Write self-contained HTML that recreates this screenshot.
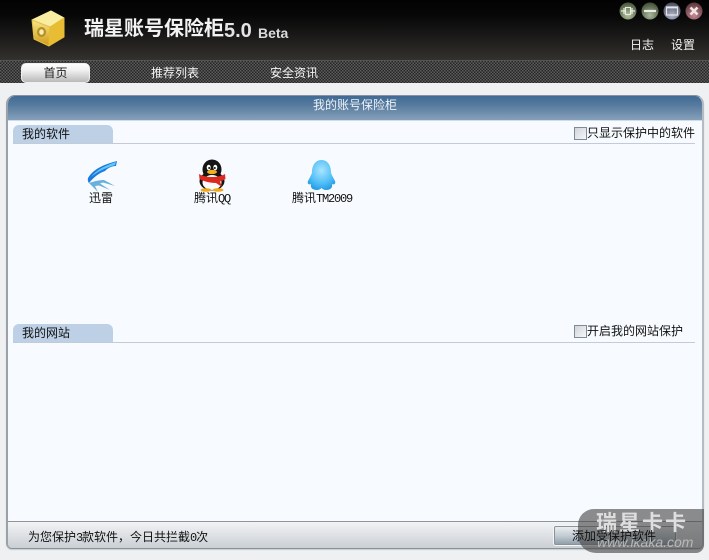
<!DOCTYPE html>
<html><head><meta charset="utf-8">
<style>
html,body{margin:0;padding:0}
body{width:709px;height:560px;position:relative;overflow:hidden;background:#eef0f2;font:12px/14px "Liberation Sans","WenQuanYi Zen Hei","Noto Sans CJK SC",sans-serif;color:#111}
div,span{position:absolute;white-space:nowrap}
span.m{position:static;font:12px/14px "Liberation Mono",monospace;letter-spacing:-1.2px}
svg{position:absolute}
.hd{left:0;top:0;width:709px;height:60px;background:linear-gradient(#020202 0,#070707 15px,#1c1b1a 38px,#32312d 60px)}
.nav{left:0;top:60px;width:709px;height:23px;border-top:1px solid #55544f;box-sizing:border-box;background-color:#3a3a3a;background-image:repeating-conic-gradient(#262626 0 25%,#5c5c5c 0 50%);background-size:3px 3px}
.white{color:#f4f4f4}
.panel{left:6px;top:95px;width:698px;height:454px;box-sizing:border-box;border:1px solid #87929e;border-left:2px solid #9aa1a8;border-right:2px solid #b4bbc2;border-radius:9px 9px 6px 6px;background:#f7fbff;overflow:hidden;box-shadow:0 1px 1px #c8cacc}
.tb{left:0;top:0;width:694px;height:24px;background:linear-gradient(#3f6a94,#55799d 35%,#86a0ba);border-bottom:1px solid #cfdbe6;text-align:center;color:#eef3f8;line-height:18px}
.tab{left:13px;width:100px;height:19px;background:#bdd0e6;border-radius:6px 6px 0 0;text-indent:9px;line-height:19px}
.ln{left:13px;width:682px;height:1px;background:#c3ccd6}
.cb{width:11px;height:11px;border:1px solid #808a94;background:linear-gradient(135deg,#cfd5da,#f6f8fa)}
.lb{text-align:center;width:100px}
.st{left:0;top:425px;width:694px;height:27px;background:linear-gradient(#f2f3f5,#c9ced3);border-top:1px solid #8f959b}
</style></head><body>
<div class="hd"></div>
<svg style="left:29px;top:10px" width="38" height="38" viewBox="0 0 38 38">
<defs><linearGradient id="g1" x1="0" y1="0" x2="0" y2="1"><stop offset="0" stop-color="#f6e68a"/><stop offset="1" stop-color="#d09a16"/></linearGradient></defs>
<path d="M3 10L22 1L35 8L21 17Z" fill="#f8eda0" stroke="#f8eda0" stroke-linejoin="round"/>
<path d="M3 10L21 17L20 36L5 29Z" fill="url(#g1)" stroke="#e5c040" stroke-linejoin="round"/>
<path d="M21 17L35 8L35 27L20 36Z" fill="#e8bd34" stroke="#e8bd34" stroke-linejoin="round"/>
<ellipse cx="12.500" cy="22" rx="4.500" ry="5" fill="#b58e24"/><ellipse cx="12.500" cy="22" rx="2.300" ry="2.800" fill="#f8eeb0"/>
</svg>
<div class="white" style="left:84px;top:17px;font-size:20px;line-height:24px;font-weight:bold;color:#f2f2f2">瑞星账号保险柜</div>
<div style="left:224px;top:19px;font:bold 20px/24px 'Liberation Sans',sans-serif;color:#e4e4e4">5.0</div>
<div style="left:258px;top:24px;font:bold 14px/18px 'Liberation Sans',sans-serif;color:#dcdcdc">Beta</div>

<svg style="left:618px;top:1px" width="86" height="20" viewBox="0 0 86 20">
<defs>
<radialGradient id="b1" cy=".75" r=".7"><stop offset="0" stop-color="#b5c09d"/><stop offset="1" stop-color="#4c5a41"/></radialGradient>
<radialGradient id="b2" cy=".75" r=".7"><stop offset="0" stop-color="#aab89a"/><stop offset="1" stop-color="#46523c"/></radialGradient>
<radialGradient id="b3" cy=".75" r=".7"><stop offset="0" stop-color="#b0b6c8"/><stop offset="1" stop-color="#4d5262"/></radialGradient>
<radialGradient id="b4" cy=".75" r=".7"><stop offset="0" stop-color="#c48a92"/><stop offset="1" stop-color="#623840"/></radialGradient>
</defs>
<circle cx="10" cy="10" r="8.500" fill="url(#b1)"/><circle cx="32" cy="10" r="8.500" fill="url(#b2)"/><circle cx="54" cy="10" r="8.500" fill="url(#b3)"/><circle cx="76" cy="10" r="8.500" fill="url(#b4)"/>
<path d="M3 10H7M13 10H17M6 7V13M14 7V13" stroke="#e8ece0" stroke-width="1.200" fill="none"/><rect x="7.500" y="6.500" width="5" height="7" fill="none" stroke="#e8ece0" stroke-width="1.100"/>
<path d="M26 10H38" stroke="#e8ece0" stroke-width="2.200"/>
<rect x="48.500" y="6" width="11" height="8" fill="none" stroke="#e4e6ee" stroke-width="1.200"/><path d="M48.500 6.700H59.500" stroke="#e4e6ee" stroke-width="1.400"/>
<path d="M72.500 6.500L79.500 13.500M79.500 6.500L72.500 13.500" stroke="#f0e4e4" stroke-width="2.600"/>
</svg>
<div class="white" style="left:630px;top:38px">日志</div>
<div class="white" style="left:671px;top:38px">设置</div>

<div class="nav"></div>
<div style="left:21px;top:63px;width:69px;height:20px;box-sizing:border-box;border-radius:5px;border:1px solid #efefef;background:linear-gradient(#fdfdfd,#f0f0f0 35%,#b9b9b9);text-align:center;line-height:18px;color:#222">首页</div>
<div class="white" style="left:151px;top:66px">推荐列表</div>
<div class="white" style="left:270px;top:66px">安全资讯</div>

<div class="panel">
 <div class="tb">我的账号保险柜</div>
 <div class="st"></div>
</div>

<div class="tab" style="top:125px">我的软件</div>
<div class="ln" style="top:143px"></div>
<div class="cb" style="left:574px;top:127px"></div>
<div style="left:587px;top:126px">只显示保护中的软件</div>

<svg style="left:86px;top:160px" width="32" height="34" viewBox="0 0 32 34">
<path d="M31 1C20 4 8 8 2 18C1.500 20 2 22 3 23C8 17 13 13 19 11C23 7 27 6 30 6Z" fill="#1d7be0"/>
<path d="M30 2C21 5 11 9 5 17C11 12 19 8 29 5Z" fill="#62c6f7"/>
<path d="M3 23C9 21 14 20 18 20L29 26L17 22.500L14 23.500L24 30L13 25.500L9 26L12 32L6 26Z" fill="#6ab0dc"/>
</svg>
<div class="lb" style="left:51px;top:191px">迅雷</div>

<svg style="left:196px;top:159px" width="32" height="33" viewBox="0 0 32 33">
<ellipse cx="16" cy="10.500" rx="9.500" ry="10" fill="#151515"/>
<ellipse cx="16" cy="22" rx="12.500" ry="9.500" fill="#151515"/>
<ellipse cx="16" cy="23.500" rx="9.500" ry="7.500" fill="#fbfbfb"/>
<ellipse cx="12.700" cy="8.500" rx="2" ry="2.800" fill="#fff"/><ellipse cx="19.300" cy="8.500" rx="2" ry="2.800" fill="#fff"/>
<circle cx="13.200" cy="9" r="1" fill="#111"/><circle cx="18.800" cy="9" r="1" fill="#111"/>
<ellipse cx="16" cy="13" rx="5" ry="2.100" fill="#f3b21c"/>
<path d="M3 15C10 19 22 19 29 15L29.500 20C26 22 25 22 24 22.500L26 28L20 24C13 24 7 22 3.500 20Z" fill="#dd2a1e"/>
<ellipse cx="10" cy="31" rx="5.500" ry="1.800" fill="#f0a916"/><ellipse cx="22" cy="31" rx="5.500" ry="1.800" fill="#f0a916"/>
</svg>
<div class="lb" style="left:162px;top:191px">腾讯<span class="m">QQ</span></div>

<svg style="left:305px;top:159px" width="33" height="33" viewBox="0 0 33 33">
<defs><radialGradient id="q" cx=".5" cy=".35" r=".75"><stop offset="0" stop-color="#a8e5ff"/><stop offset=".6" stop-color="#4cbcf6"/><stop offset="1" stop-color="#1a8ddc"/></radialGradient></defs>
<path d="M16.500 1C23 1 26 7 26 13C26 15 28 18 30 22C31 25 29 26 27 25C28 29 25 31 21 31C19 31 17.500 30 16.500 29C15.500 30 14 31 12 31C8 31 5 29 6 25C4 26 2 25 3 22C5 18 7 15 7 13C7 7 10 1 16.500 1Z" fill="url(#q)"/>
</svg>
<div class="lb" style="left:272px;top:191px">腾讯<span class="m">TM2009</span></div>

<div class="tab" style="top:324px">我的网站</div>
<div class="ln" style="top:342px"></div>
<div class="cb" style="left:574px;top:325px"></div>
<div style="left:587px;top:324px">开启我的网站保护</div>

<div style="left:28px;top:530px">为您保护<span class="m">3</span>款软件，今日共拦截<span class="m">0</span>次</div>
<div style="left:553px;top:525px;width:124px;height:21px;box-sizing:border-box;border:1px solid #f4f5f6;outline:1px solid #8a929a;outline-offset:-2px;border-radius:3px;background:linear-gradient(#eef1f3,#c3cdd4 50%,#8c9aa6)"></div>

<div style="left:578px;top:509px;width:126px;height:44px;background:rgba(70,70,70,.62);border-radius:16px 0 8px 18px"></div>
<div style="left:596px;top:512px;font:bold 21px/24px 'Liberation Sans','WenQuanYi Zen Hei','Noto Sans CJK SC',sans-serif;letter-spacing:2px;color:#dedede">瑞星卡卡</div>
<div style="left:597px;top:534px;font:italic 14px/16px 'Liberation Sans',sans-serif;color:#b8b8b8">www.ikaka.com</div>
<div style="left:572px;top:529px;color:#111">添加受保护软件</div>
</body></html>
